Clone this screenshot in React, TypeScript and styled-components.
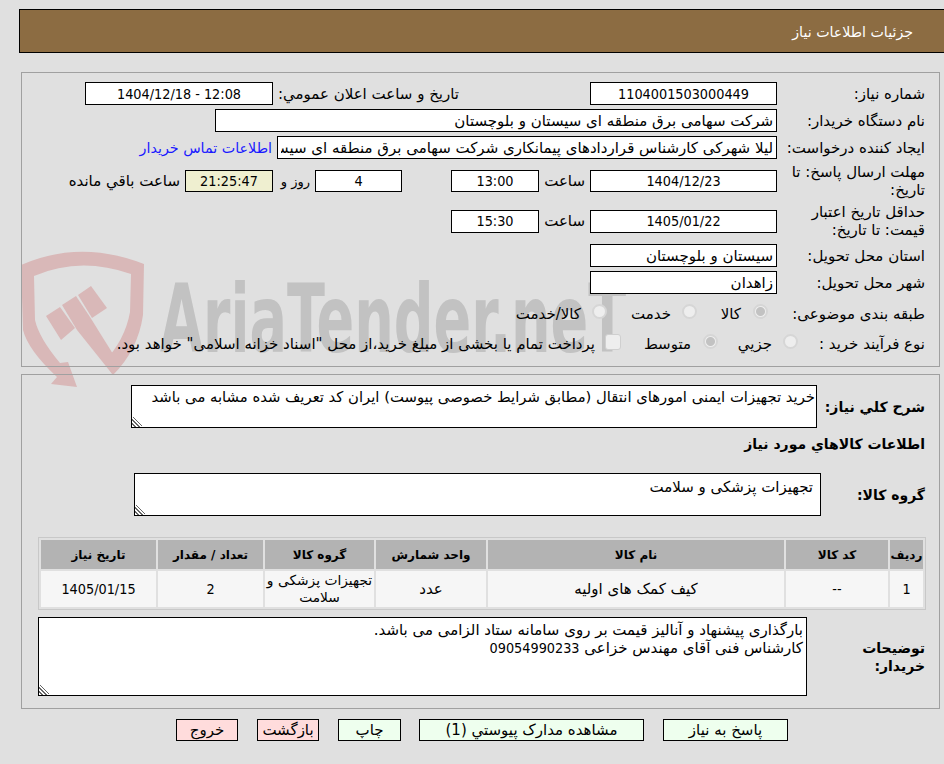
import React from 'react';
import styled, { createGlobalStyle, css } from 'styled-components';

const GlobalStyle = createGlobalStyle`
  html, body {
    margin: 0;
    padding: 0;
    background: #e0e0e0;
  }
  body {
    font-family: "DejaVu Sans", Tahoma, sans-serif;
    font-size: 15px;
    color: #000;
    overflow: hidden;
  }
`;

const digitFont = css`
  font-family: "DejaVu Sans Condensed", "DejaVu Sans", sans-serif;
  font-size: 14.3px;
`;

const Page = styled.div`
  position: relative;
  width: 944px;
  height: 764px;
  box-sizing: border-box;
  padding: 9px 0 0 19px;
  direction: rtl;
  overflow: hidden;
`;

const Header = styled.div`
  height: 44px;
  box-sizing: border-box;
  border: 1px solid #000;
  border-right: 0;
  background: #8c6c42;
  color: #fff;
  padding: 0 31px 0 0;
  line-height: 44px;
  font-size: 14.2px;
`;

const Section = styled.section<{ $height: number; $top: number; $pad: number }>`
  position: relative;
  z-index: 1;
  box-sizing: border-box;
  width: 919px;
  height: ${(p) => p.$height}px;
  margin: ${(p) => p.$top}px 4px 0 0;
  border: 1px solid #a0a0a0;
  padding: ${(p) => p.$pad}px 14px 0 0;
`;

const Row = styled.div<{ $height?: number; $gap?: number; $top?: number }>`
  display: flex;
  align-items: center;
  height: ${(p) => p.$height ?? 23}px;
  margin-top: ${(p) => p.$top ?? 0}px;
  margin-bottom: ${(p) => p.$gap ?? 4}px;
`;

const Label = styled.div<{ $width?: number }>`
  width: ${(p) => p.$width ?? 148}px;
  flex: none;
  line-height: 18px;
`;

const Field = styled.input.attrs({ readOnly: true })<{
  $width: number;
  $center?: boolean;
  $bg?: string;
  $digits?: boolean;
  $short?: boolean;
}>`
  box-sizing: border-box;
  flex: none;
  width: ${(p) => p.$width}px;
  height: ${(p) => (p.$short ? 22 : 23)}px;
  padding: 0 3px;
  border: 1px solid #000;
  border-radius: 0;
  outline: none;
  background: ${(p) => p.$bg ?? '#fff'};
  color: #000;
  font: inherit;
  ${(p) => p.$digits && digitFont}
  text-align: ${(p) => (p.$center ? 'center' : 'right')};
`;

const Slot = styled.span<{ $width?: number; $right?: number; $size?: number }>`
  flex: none;
  box-sizing: border-box;
  width: ${(p) => (p.$width ? `${p.$width}px` : 'auto')};
  padding-right: ${(p) => p.$right ?? 0}px;
  font-size: ${(p) => (p.$size ? `${p.$size}px` : 'inherit')};
  white-space: nowrap;
`;

const ContactLink = styled.a`
  flex: none;
  margin-right: 5px;
  font-size: 14.3px;
  color: #1a1aff;
  white-space: nowrap;
`;

const Choice = styled.input<{ $right?: number; $left?: number }>`
  appearance: none;
  flex: none;
  box-sizing: border-box;
  width: ${(p) => (p.type === 'radio' ? 15 : 16)}px;
  height: ${(p) => (p.type === 'radio' ? 15 : 16)}px;
  margin: -5px ${(p) => p.$right ?? 0}px 0 ${(p) => p.$left ?? 0}px;
  border: ${(p) => (p.type === 'radio' ? '2px solid #d6d6d6' : '1px solid #cfcfcf')};
  background: #eeeeee;
  border-radius: ${(p) => (p.type === 'radio' ? '50%' : '3px')};
  &:checked {
    background: radial-gradient(circle, #c2c2c2 0 4px, #eeeeee 5px);
  }
`;

const BoldLabel = styled.div<{ $width: number }>`
  width: ${(p) => p.$width}px;
  flex: none;
  font-size: 14px;
  font-weight: bold;
  line-height: 18px;
`;

const NoteBox = styled.div<{ $width: number; $height: number; $padding: string; $size?: number }>`
  box-sizing: border-box;
  flex: none;
  width: ${(p) => p.$width}px;
  height: ${(p) => p.$height}px;
  padding: ${(p) => p.$padding};
  border: 1px solid #000;
  background: #fff;
  font-size: ${(p) => p.$size ?? 15}px;
  line-height: 18px;
  white-space: pre-line;
  overflow: auto;
  resize: both;
  &::-webkit-resizer {
    background: linear-gradient(
        45deg,
        transparent 0 2px,
        #666 2px 3.2px,
        transparent 3.2px 4.6px,
        #666 4.6px 5.8px,
        transparent 5.8px 7.2px,
        #666 7.2px 8.4px,
        transparent 8.4px
      )
      left bottom / 10px 10px no-repeat;
  }
`;

const Digits = styled.span`
  ${digitFont}
`;

const Heading = styled.div`
  font-size: 14px;
  font-weight: bold;
  height: 20px;
  line-height: 20px;
  margin-bottom: 19px;
`;

const ItemsTable = styled.table`
  width: 888px;
  margin: 21px -1px 0 0;
  border: 1px solid #c8c8c8;
  border-collapse: separate;
  border-spacing: 2px;
  table-layout: fixed;
  text-align: center;
`;

const HeadCell = styled.th<{ $width: number }>`
  width: ${(p) => p.$width}px;
  height: 29px;
  padding: 0;
  background: #b3b3b3;
  font-size: 12px;
  font-weight: bold;
`;

const Cell = styled.td<{ $digits?: boolean; $tight?: boolean }>`
  height: 36px;
  padding: 0;
  background: #f6f6f6;
  font-size: ${(p) => (p.$tight ? '13.8px' : 'inherit')};
  line-height: 17px;
  white-space: nowrap;
  ${(p) => p.$digits && digitFont}
`;

const Toolbar = styled.div`
  position: relative;
  z-index: 1;
  display: flex;
  align-items: center;
  margin: 10px 156px 0 0;
`;

const ActionButton = styled.button<{ $width: number; $danger?: boolean; $gap?: number }>`
  box-sizing: border-box;
  flex: none;
  width: ${(p) => p.$width}px;
  height: 22px;
  margin-left: ${(p) => p.$gap ?? 19}px;
  padding: 0;
  border: 1px solid #000;
  border-radius: 0;
  background: ${(p) => (p.$danger ? '#ffdcdc' : '#eeffee')};
  color: #000;
  font: inherit;
`;

const Watermark = styled.div`
  position: absolute;
  left: 20px;
  top: 250px;
  width: 640px;
  height: 140px;
  z-index: 0;
  direction: ltr;
`;

const WatermarkLogo = styled.svg`
  position: absolute;
  left: 0;
  top: 0;
`;

const WatermarkText = styled.span`
  position: absolute;
  left: 140px;
  top: 22px;
  font-family: "DejaVu Sans Condensed", "DejaVu Sans", sans-serif;
  font-size: 95px;
  font-weight: bold;
  line-height: 1;
  color: #c2c2c2;
  white-space: nowrap;
  transform-origin: left top;
  transform: scaleX(0.65);
`;

const Shield = () => (
  <WatermarkLogo width="130" height="140" viewBox="0 0 130 140">
    <path
      d="M1 15 Q60 -11 124 14 L123 65 Q118 100 93 125 L84 112 Q105 90 110 62 L111 24 Q60 6 14 26 L15 70 Q19 88 40 113 L48 112 L57 137 L31 134 L37 127 Q8 100 3 80 Z"
      fill="#d9b8b8"
    />
    <path d="M26 66 L40 57 L55 78 L41 90 Z" fill="#d9b8b8" />
    <path d="M42 55 L56 46 L70 67 L98 112 L93 125 L57 80 Z" fill="#d9b8b8" />
    <path d="M58 45 L71 36 L87 58 L72 68 Z" fill="#d9b8b8" />
  </WatermarkLogo>
);

const App = () => {
  return (
    <>
      <GlobalStyle />
      <Page>
        <Watermark>
          <Shield />
          <WatermarkText>AriaTender.neT</WatermarkText>
        </Watermark>
        <Header>جزئیات اطلاعات نیاز</Header>
        <Section $height={295} $top={19} $pad={9}>
          <Row>
            <Label>شماره نياز:</Label>
            <Field $width={187} $center $digits value="1104001503000449" />
            <Slot $width={317} $right={131}>تاریخ و ساعت اعلان عمومي:</Slot>
            <Field $width={188} $center $digits value="12:08 - 1404/12/18" />
          </Row>
          <Row>
            <Label>نام دستگاه خریدار:</Label>
            <Field $width={562} value="شرکت سهامی برق منطقه ای سیستان و بلوچستان" />
          </Row>
          <Row>
            <Label>ایجاد کننده درخواست:</Label>
            <Field $width={500} value="لیلا شهرکی کارشناس قراردادهای پیمانکاری شرکت سهامی برق منطقه ای سیستان و بلوچستان" />
            <ContactLink>اطلاعات تماس خریدار</ContactLink>
          </Row>
          <Row $height={36}>
            <Label>مهلت ارسال پاسخ: تا تاریخ:</Label>
            <Field $width={187} $center $digits $short value="1404/12/23" />
            <Slot $width={51} $right={5}>ساعت</Slot>
            <Field $width={88} $center $digits $short value="13:00" />
            <Slot $width={49} />
            <Field $width={87} $center $digits $short value="4" />
            <Slot $width={42} $right={5} $size={13}>روز و</Slot>
            <Field $width={88} $center $digits $short $bg="#efefd0" value="21:25:47" />
            <Slot $right={5}>ساعت باقي مانده</Slot>
          </Row>
          <Row $height={36} $gap={5}>
            <Label>حداقل تاریخ اعتبار قیمت: تا تاریخ:</Label>
            <Field $width={187} $center $digits value="1405/01/22" />
            <Slot $width={51} $right={5}>ساعت</Slot>
            <Field $width={88} $center $digits value="15:30" />
          </Row>
          <Row>
            <Label>استان محل تحویل:</Label>
            <Field $width={187} value="سیستان و بلوچستان" />
          </Row>
          <Row $gap={7}>
            <Label>شهر محل تحویل:</Label>
            <Field $width={187} value="زاهدان" />
          </Row>
          <Row $height={26}>
            <Label>طبقه بندی موضوعی:</Label>
            <Choice type="radio" disabled defaultChecked $right={9} $left={12} />
            <Slot $width={44}>کالا</Slot>
            <Choice type="radio" disabled $left={11} />
            <Slot $width={64}>خدمت</Slot>
            <Choice type="radio" disabled $left={11} />
            <Slot>کالا/خدمت</Slot>
          </Row>
          <Row $height={26}>
            <Label $width={127}>نوع فرآیند خرید :</Label>
            <Choice type="radio" disabled $left={11} />
            <Slot $width={54}>جزیي</Slot>
            <Choice type="radio" disabled defaultChecked $left={12} />
            <Slot $width={70}>متوسط</Slot>
            <Choice type="checkbox" disabled $left={10} />
            <Slot>پرداخت تمام یا بخشی از مبلغ خرید،از محل "اسناد خزانه اسلامی" خواهد بود.</Slot>
          </Row>
        </Section>
        <Section $height={335} $top={7} $pad={10}>
          <Row $height={43} $gap={6}>
            <BoldLabel $width={108}>شرح کلي نیاز:</BoldLabel>
            <NoteBox $width={686} $height={43} $padding="2px 1px 0 0" $size={14.8}>
              خرید تجهیزات ایمنی امورهای انتقال (مطابق شرایط خصوصی پیوست) ایران کد تعریف شده مشابه می باشد
            </NoteBox>
          </Row>
          <Heading>اطلاعات کالاهاي مورد نیاز</Heading>
          <Row $height={43} $gap={0}>
            <BoldLabel $width={104}>گروه کالا:</BoldLabel>
            <NoteBox $width={687} $height={43} $padding="4px 7px 0 0">
              تجهیزات پزشکی و سلامت
            </NoteBox>
          </Row>
          <ItemsTable>
            <thead>
              <tr>
                <HeadCell $width={33}>ردیف</HeadCell>
                <HeadCell $width={102}>کد کالا</HeadCell>
                <HeadCell $width={296}>نام کالا</HeadCell>
                <HeadCell $width={110}>واحد شمارش</HeadCell>
                <HeadCell $width={109}>گروه کالا</HeadCell>
                <HeadCell $width={105}>تعداد / مقدار</HeadCell>
                <HeadCell $width={115}>تاریخ نیاز</HeadCell>
              </tr>
            </thead>
            <tbody>
              <tr>
                <Cell $digits>1</Cell>
                <Cell $digits>--</Cell>
                <Cell>کیف کمک های اولیه</Cell>
                <Cell>عدد</Cell>
                <Cell $tight>
                  تجهیزات پزشکی و
                  <br />
                  سلامت
                </Cell>
                <Cell $digits>2</Cell>
                <Cell $digits>1405/01/15</Cell>
              </tr>
            </tbody>
          </ItemsTable>
          <Row $height={79} $gap={0} $top={7}>
            <BoldLabel $width={118}>توضیحات خریدار:</BoldLabel>
            <NoteBox $width={769} $height={79} $padding="3px 3px 0 0">
              {'بارگذاری پیشنهاد و آنالیز قیمت بر روی سامانه ستاد الزامی می باشد.\nکارشناس فنی آقای مهندس خزاعی '}
              <Digits>09054990233</Digits>
            </NoteBox>
          </Row>
        </Section>
        <Toolbar>
          <ActionButton $width={125}>پاسخ به نیاز</ActionButton>
          <ActionButton $width={225} $gap={18}>مشاهده مدارک پیوستي (1)</ActionButton>
          <ActionButton $width={63}>چاپ</ActionButton>
          <ActionButton $width={62} $danger>بازگشت</ActionButton>
          <ActionButton $width={62} $danger $gap={0}>خروج</ActionButton>
        </Toolbar>
      </Page>
    </>
  );
};

export default App;
